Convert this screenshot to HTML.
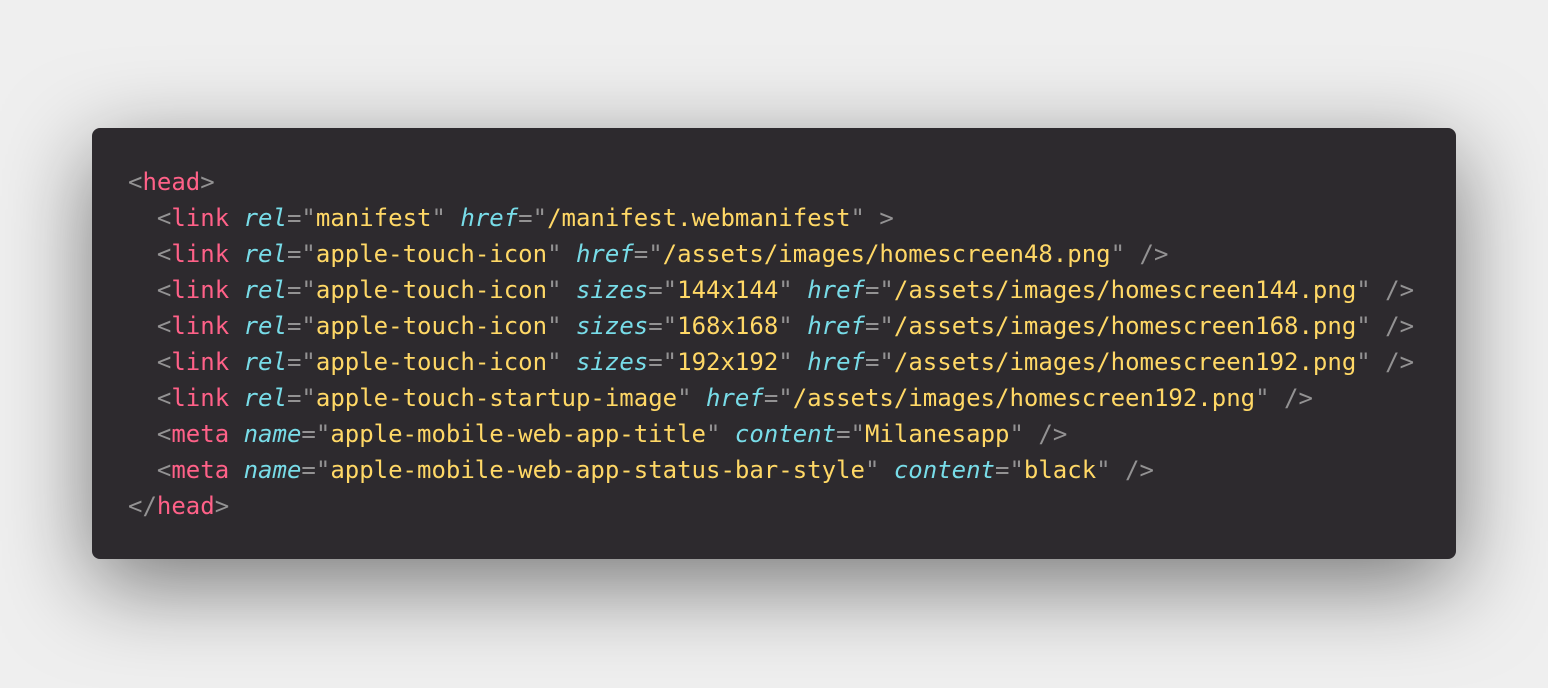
<!DOCTYPE html>
<html><head><style>
html,body{margin:0;padding:0;width:1548px;height:688px;background:#efefef;overflow:hidden}
.card{position:absolute;left:92px;top:128px;width:1364px;height:431px;background:#2d2a2e;border-radius:8px;box-shadow:0 25px 90px rgba(0,0,0,0.5)}
pre{position:absolute;left:128px;top:164px;margin:0;font-family:"DejaVu Sans Mono","Liberation Mono",monospace;font-size:24px;line-height:36px;color:#939293}
.t{color:#ff6188}.a{color:#78dce8;font-style:italic}.s{color:#ffd866}
</style></head><body>
<div class="card"></div>
<pre>&lt;<span class="t">head</span>&gt;
  &lt;<span class="t">link</span> <span class="a">rel</span>="<span class="s">manifest</span>" <span class="a">href</span>="<span class="s">/manifest.webmanifest</span>" &gt;
  &lt;<span class="t">link</span> <span class="a">rel</span>="<span class="s">apple-touch-icon</span>" <span class="a">href</span>="<span class="s">/assets/images/homescreen48.png</span>" /&gt;
  &lt;<span class="t">link</span> <span class="a">rel</span>="<span class="s">apple-touch-icon</span>" <span class="a">sizes</span>="<span class="s">144x144</span>" <span class="a">href</span>="<span class="s">/assets/images/homescreen144.png</span>" /&gt;
  &lt;<span class="t">link</span> <span class="a">rel</span>="<span class="s">apple-touch-icon</span>" <span class="a">sizes</span>="<span class="s">168x168</span>" <span class="a">href</span>="<span class="s">/assets/images/homescreen168.png</span>" /&gt;
  &lt;<span class="t">link</span> <span class="a">rel</span>="<span class="s">apple-touch-icon</span>" <span class="a">sizes</span>="<span class="s">192x192</span>" <span class="a">href</span>="<span class="s">/assets/images/homescreen192.png</span>" /&gt;
  &lt;<span class="t">link</span> <span class="a">rel</span>="<span class="s">apple-touch-startup-image</span>" <span class="a">href</span>="<span class="s">/assets/images/homescreen192.png</span>" /&gt;
  &lt;<span class="t">meta</span> <span class="a">name</span>="<span class="s">apple-mobile-web-app-title</span>" <span class="a">content</span>="<span class="s">Milanesapp</span>" /&gt;
  &lt;<span class="t">meta</span> <span class="a">name</span>="<span class="s">apple-mobile-web-app-status-bar-style</span>" <span class="a">content</span>="<span class="s">black</span>" /&gt;
&lt;/<span class="t">head</span>&gt;</pre>
</body></html>
